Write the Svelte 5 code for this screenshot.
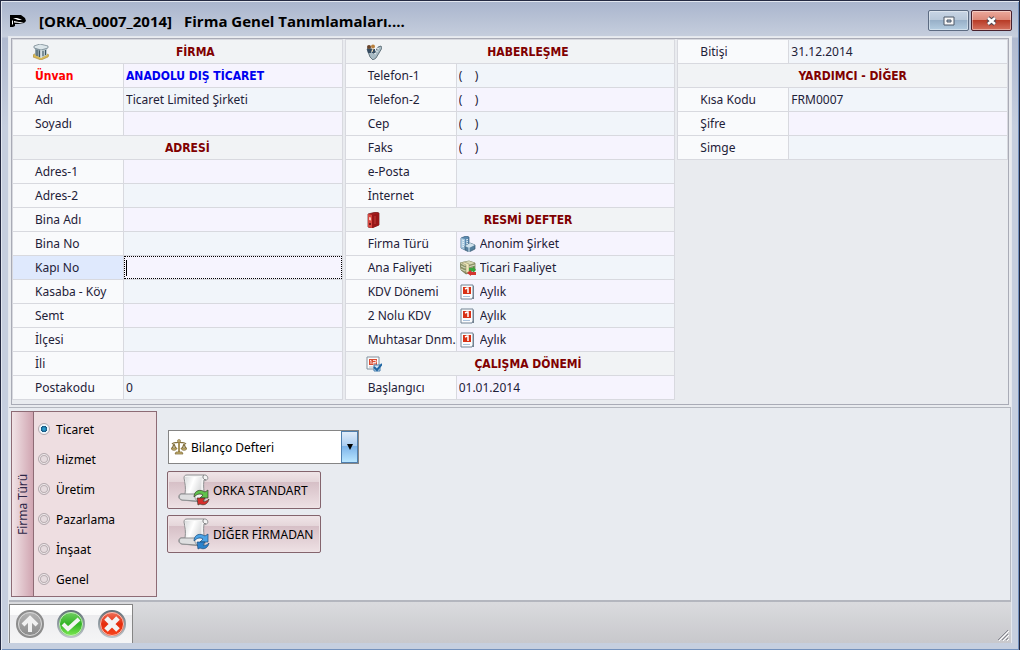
<script>
	let firmType = $state("Ticaret");
	let ledger = $state("Bilanço Defteri");

	const firmTypes = ["Ticaret", "Hizmet", "Üretim", "Pazarlama", "İnşaat", "Genel"];
	const ledgers = ["Bilanço Defteri", "İşletme Defteri"];
	const periods = ["Aylık", "3 Aylık"];

	// rows with a title are section headers, tone picks the field background
	let columns = $state([
		[
			{ title: "FİRMA", icon: "building" },
			{ id: "unvan", label: "Ünvan", value: "ANADOLU DIŞ TİCARET", tone: "pink", strong: true },
			{ id: "adi", label: "Adı", value: "Ticaret Limited Şirketi", tone: "blue" },
			{ id: "soyadi", label: "Soyadı", value: "", tone: "pink" },
			{ title: "ADRESİ" },
			{ id: "adres1", label: "Adres-1", value: "", tone: "pink" },
			{ id: "adres2", label: "Adres-2", value: "", tone: "blue" },
			{ id: "binaadi", label: "Bina Adı", value: "", tone: "pink" },
			{ id: "binano", label: "Bina No", value: "", tone: "blue" },
			{ id: "kapino", label: "Kapı No", value: "", tone: "pink", active: true },
			{ id: "kasaba", label: "Kasaba - Köy", value: "", tone: "blue" },
			{ id: "semt", label: "Semt", value: "", tone: "pink" },
			{ id: "ilcesi", label: "İlçesi", value: "", tone: "blue" },
			{ id: "ili", label: "İli", value: "", tone: "pink" },
			{ id: "posta", label: "Postakodu", value: "0", tone: "blue" }
		],
		[
			{ title: "HABERLEŞME", icon: "phone" },
			{ id: "tel1", label: "Telefon-1", value: "(    )", tone: "blue" },
			{ id: "tel2", label: "Telefon-2", value: "(    )", tone: "pink" },
			{ id: "cep", label: "Cep", value: "(    )", tone: "blue" },
			{ id: "faks", label: "Faks", value: "(    )", tone: "pink" },
			{ id: "eposta", label: "e-Posta", value: "", tone: "blue" },
			{ id: "internet", label: "İnternet", value: "", tone: "pink" },
			{ title: "RESMİ DEFTER", icon: "binder" },
			{ id: "turu", label: "Firma Türü", value: "Anonim Şirket", tone: "pink", icon: "tower", options: ["Anonim Şirket", "Limited Şirket"] },
			{ id: "faliyet", label: "Ana Faliyeti", value: "Ticari Faaliyet", tone: "blue", icon: "money", options: ["Ticari Faaliyet", "Zirai Faaliyet"] },
			{ id: "kdv", label: "KDV Dönemi", value: "Aylık", tone: "pink", icon: "day", options: periods },
			{ id: "kdv2", label: "2 Nolu KDV", value: "Aylık", tone: "blue", icon: "day", options: periods },
			{ id: "muhtasar", label: "Muhtasar Dnm.", value: "Aylık", tone: "pink", icon: "day", options: periods },
			{ title: "ÇALIŞMA DÖNEMİ", icon: "calendar" },
			{ id: "baslangic", label: "Başlangıcı", value: "01.01.2014", tone: "pink" }
		],
		[
			{ id: "bitis", label: "Bitişi", value: "31.12.2014", tone: "blue" },
			{ title: "YARDIMCI - DİĞER" },
			{ id: "kod", label: "Kısa Kodu", value: "FRM0007", tone: "blue" },
			{ id: "sifre", label: "Şifre", value: "", tone: "pink" },
			{ id: "simge", label: "Simge", value: "", tone: "blue" }
		]
	]);
</script>

{#snippet icon(name)}
	<svg class="icon" width="16" height="16" viewBox="0 0 16 16" aria-hidden="true">
		{#if name == "building"}
			<path d="M0 11l3-2 11 1 2 1-1 2-7 3-8-3z" fill="#d8b957" stroke="#a78b3c" stroke-width=".6" />
			<path d="M2 3l6 2v9l-6-3z" fill="#8fa2ab" />
			<path d="M8 5l6-2v8l-6 3z" fill="#b8c8cf" />
			<path d="M1 2l6-2 8 2v2L8 6 1 4z" fill="#dce6ea" stroke="#6c7d86" stroke-width=".7" />
			<path d="M4 6v6M6.500 6.500v6.500M10 7v5M12.500 6v5" stroke="#3e5662" stroke-width="1" />
			<path d="M8 6v8" stroke="#f4f8fa" />
		{:else if name == "phone"}
			<path d="M1 5l2-2 4 3 1 4 4-7 3-1 1 2-6 10-3 2-3-3z" fill="#a9bbc4" stroke="#4b5d67" stroke-width=".8" />
			<path d="M11 4l2 1M9.500 6.500l2 1M8 9l2 1" stroke="#edf4f7" />
			<circle cx="3" cy="3" r="2" fill="#664229" />
			<circle cx="7" cy="2.500" r="2" fill="#b77f3d" />
			<path d="M1 5h4v4H2zM5 5h4v4H6z" fill="#344a60" />
			<path d="M7 5l-1 3" stroke="#f4dfb8" />
		{:else if name == "binder"}
			<path d="M2 2l8-2 3 1v12l-7 3-4-1z" fill="#a51d1e" stroke="#651111" stroke-width=".7" />
			<path d="M2 2l4 1v13l-4-1z" fill="#d84740" />
			<path d="M6 3l7-2v12l-7 3z" fill="#981516" />
			<path d="M3 5l2 .5v3L3 8z" fill="#f4c9bd" />
			<circle cx="4" cy="12" r="1" fill="#521011" />
			<path d="M9 4v8" stroke="#bf3e38" />
		{:else if name == "tower"}
			<path d="M1 2l5-2 3 1v11l-4 2-4-2z" fill="#5c8ab0" stroke="#355a78" stroke-width=".7" />
			<path d="M1 2l4 1v11l-4-2z" fill="#9fc1d9" />
			<path d="M2 4l2 .5M2 6l2 .5M2 8l2 .5M2 10l2 .5M6 4l2-.5M6 6l2-.5M6 8l2-.5" stroke="#eaf5fb" />
			<path d="M5 10l5-3 5 2v4l-6 3-4-2z" fill="#55809f" stroke="#35576f" stroke-width=".7" />
			<path d="M5 10l5-3 5 2-6 3z" fill="#cfe1ec" />
			<path d="M9 12v4" stroke="#dcebf4" />
		{:else if name == "money"}
			<path d="M0 3l9-2 6 2v7l-9 4-5-4z" fill="#8b9367" stroke="#696d44" stroke-width=".7" />
			<path d="M0 3l9-2 6 2-10 3z" fill="#d7d8b4" />
			<path d="M1 6l4 2 10-3M1 9l4 2 9-3" stroke="#d9dbc1" fill="none" />
			<path d="M4 2l5 2v8l-3 1V5L2 3z" fill="#eee6b9" stroke="#87825b" stroke-width=".5" />
			<path d="M9 11V8h4V6l3 4-3 3v-2z" fill="#36a63b" />
			<path d="M16 12v3h-5v1l-4-3 4-3v2z" fill="#d43631" />
		{:else if name == "day"}
			<path d="M3 2h11v13H3z" fill="#71808e" />
			<path d="M1 1h12v12l-1 2H1z" fill="#fbfcfd" stroke="#728394" />
			<path d="M3 3h8v7H3z" fill="#d93116" />
			<path d="M5 5l2-1h1v5" fill="none" stroke="#fff" stroke-width="1.500" />
			<path d="M3 12.500h7" stroke="#a9c1dc" />
		{:else if name == "calendar"}
			<path d="M1 1h12v12H1z" fill="#fcfcfd" stroke="#81909d" />
			<path d="M3 3h8v6H3z" fill="#d94b32" />
			<path d="M4 4.500h1V8M7 4.500h3v2H7V8h3" fill="none" stroke="#fff" stroke-width=".8" />
			<path d="M3 11h6" stroke="#aebdca" />
			<path d="M8 9h6v6H8z" fill="#d3e5f5" stroke="#477fad" />
			<path d="M8 11l3 3 5-6" fill="none" stroke="#1d65a3" stroke-width="2" />
		{:else if name == "scales"}
			<path d="M8 1v12M5 14h6M1 5c3-3 4 0 7-2 3 2 4-1 7 2M3 5l-2 5M3 5l2 5M13 5l-2 5M13 5l2 5" fill="none" stroke="#84713e" stroke-width="1.300" />
			<path d="M7 2h2v12H7z" fill="#a8935a" />
			<path d="M0 9h6c0 3-6 3-6 0zM10 9h6c0 3-6 3-6 0zM5 13h6l1 2H4z" fill="#c9b575" stroke="#77622f" stroke-width=".7" />
			<circle cx="8" cy="2" r="1.500" fill="#c9b575" stroke="#77622f" stroke-width=".6" />
		{/if}
	</svg>
{/snippet}

{#snippet scroll(up, down, edge)}
	<svg width="32" height="32" viewBox="0 0 32 32" aria-hidden="true">
		<path d="M6 4C6 2 7 1 9 1h18c3 0 4 5 1 5h-2c-1 6 0 11 1 18 0 2-1 4-3 4L4 26c-4 0-4-6-1-6h4c1-6 0-11-1-16z" fill="#f4f4f4" stroke="#8e8f91" />
		<path d="M7 3h17c-1 7-1 11 0 18H8c1-6 0-12-1-18z" fill="url(#paper)" />
		<path d="M3 20h15c-2 2-1 5 1 7L4 26c-4-1-3-5-1-6z" fill="#dedfe0" stroke="#8e8f91" />
		<path d="M26 1c-2 1-1 5 2 5" fill="none" stroke="#77787a" />
		<path d="M16 23c0-5 4-8 9-6l2 1 3-2v8h-8l3-3c-3-2-6-1-9 2z" fill={up} stroke={edge} stroke-width=".7" />
		<path d="M31 25c-1 5-5 7-9 5l-2 1-1-7h8l-2 3c2 1 4 0 6-2z" fill={down} stroke={edge} stroke-width=".7" />
	</svg>
{/snippet}

<main class="window">
	<svg width="0" height="0" class="defs" aria-hidden="true">
		<defs>
			<linearGradient id="paper" x2="1" y2=".4"><stop stop-color="#d9dbdc" /><stop offset=".5" stop-color="#fff" /><stop offset="1" stop-color="#dbdcdd" /></linearGradient>
			<linearGradient id="gray" x2="0" y2="1"><stop stop-color="#b5b5b5" /><stop offset="1" stop-color="#898989" /></linearGradient>
			<linearGradient id="green" x2="0" y2="1"><stop stop-color="#78d26a" /><stop offset=".5" stop-color="#32b424" /><stop offset="1" stop-color="#83ee55" /></linearGradient>
			<linearGradient id="red" x2="0" y2="1"><stop stop-color="#f07862" /><stop offset=".5" stop-color="#e52c0c" /><stop offset="1" stop-color="#fa4820" /></linearGradient>
			<linearGradient id="rim" x2="0" y2="1"><stop stop-color="#65737b" /><stop offset="1" stop-color="#bdc4c9" /></linearGradient>
		</defs>
	</svg>

	<header>
		<svg class="logo" width="17" height="14" viewBox="0 0 17 14" aria-hidden="true">
			<path d="M0 1h11l4 3 1 3-2 2-6 1-3 0v2l-2 1H0z" fill="#000" />
			<path d="M3 4h4l3 1 2 1H8zM4 7l5 1h5l-4 1-6-.5zM2 6v5l1-1V7z" fill="#fff" />
		</svg>
		<h1><span>[ORKA_0007_2014]</span> <span>Firma Genel Tanımlamaları....</span></h1>
		<button class="restore" aria-label="Önceki boyut">
			<svg width="12" height="10" viewBox="0 0 12 10"><path d="M1 1h10v8H1z" fill="#f7f7f7" stroke="#4c5868" /><path d="M4 4h4v2H4z" fill="#9fb5ca" stroke="#4c5868" /></svg>
		</button>
		<button class="close" aria-label="Kapat">
			<svg width="13" height="10" viewBox="0 0 13 10"><path d="M3 2l7 6M10 2L3 8" stroke="#4d4550" stroke-width="4.500" /><path d="M3 2l7 6M10 2L3 8" stroke="#fff" stroke-width="2.500" /></svg>
		</button>
	</header>

	<div class="content">
		<section class="grid">
			{#each columns as rows}
				<div class="column">
					{#each rows as row}
						{#if row.title}
							<div class="title">
								{#if row.icon}{@render icon(row.icon)}{/if}
								<h2>{row.title}</h2>
							</div>
						{:else}
							<div class="row {row.tone}" class:active={row.active} class:strong={row.strong}>
								<label for={row.id}>{row.label}</label>
								<div class="field">
									{#if row.icon}{@render icon(row.icon)}{/if}
									{#if row.options}
										<select id={row.id} bind:value={row.value}>
											{#each row.options as option}
												<option>{option}</option>
											{/each}
										</select>
									{:else}
										{#if row.active}<span class="caret"></span>{/if}
										<input id={row.id} type="text" bind:value={row.value} />
									{/if}
								</div>
							</div>
						{/if}
					{/each}
				</div>
			{/each}
		</section>

		<section class="bottom">
			<fieldset aria-label="Firma Türü">
				<div class="strip">Firma Türü</div>
				<div class="radios">
					{#each firmTypes as type}
						<label><input type="radio" name="type" value={type} bind:group={firmType} />{type}</label>
					{/each}
				</div>
			</fieldset>
			<div class="actions">
				<div class="combo">
					{@render icon("scales")}
					<select aria-label="Defter" bind:value={ledger}>
						{#each ledgers as option}
							<option>{option}</option>
						{/each}
					</select>
					<span class="arrow"></span>
				</div>
				<button class="action">{@render scroll("#5fc24c", "#d52d2b", "#3c3a2c")}<span>ORKA STANDART</span></button>
				<button class="action">{@render scroll("#4ba3e6", "#2b82cc", "#1b4a7a")}<span>DİĞER FİRMADAN</span></button>
			</div>
		</section>

		<footer>
			<div class="tools">
				<button aria-label="Yukarı">
					<svg width="30" height="30" viewBox="0 0 30 30"><circle cx="15" cy="15" r="13" fill="url(#gray)" stroke="#8c8c8c" stroke-width="2" /><circle cx="15" cy="15" r="11.500" fill="none" stroke="#d8d8d8" /><path d="M15 23V9M8 16l7-7 7 7" fill="none" stroke="#f1f1f1" stroke-width="4" /></svg>
				</button>
				<button aria-label="Tamam">
					<svg width="30" height="30" viewBox="0 0 30 30"><circle cx="15" cy="15" r="13" fill="url(#green)" stroke="url(#rim)" stroke-width="2" /><circle cx="15" cy="15" r="11.500" fill="none" stroke="#c8e8c2" /><path d="M7 15l5 5L23 10" fill="none" stroke="#f3f5f2" stroke-width="4" /></svg>
				</button>
				<button aria-label="İptal">
					<svg width="30" height="30" viewBox="0 0 30 30"><circle cx="15" cy="15" r="13" fill="url(#red)" stroke="url(#rim)" stroke-width="2" /><circle cx="15" cy="15" r="11.500" fill="none" stroke="#f3c3ba" /><path d="M9 9l12 12M21 9L9 21" fill="none" stroke="#f3f3f3" stroke-width="5" /></svg>
				</button>
			</div>
			<svg class="grip" width="12" height="12" viewBox="0 0 12 12" aria-hidden="true"><path d="M1 11L11 1M5 11l6-6M9 11l2-2" stroke="#fff" transform="translate(1 1)" /><path d="M1 11L11 1M5 11l6-6M9 11l2-2" stroke="#85868f" /></svg>
		</footer>
	</div>
</main>

<style>
	:global(body) {
		margin: 0;
	}
	* {
		box-sizing: border-box;
	}
	.window {
		display: flex;
		flex-direction: column;
		min-height: 100vh;
		padding: 0 7px 7px;
		border: 1px solid #242a42;
		background: linear-gradient(#a9b5cd, #c6cedd 36px, #b0bad0 37px, #c6cfdf 126px, #c6cfdf);
		box-shadow: inset 1px 1px #e2e7f0, inset -1px -1px #7391bd;
		font-family: "Noto Sans", Tahoma, sans-serif;
		font-size: 12px;
		color: #1e2138;
	}
	.defs {
		position: absolute;
	}
	button, input, select {
		font: inherit;
		color: inherit;
	}
	header {
		display: flex;
		align-items: center;
		height: 35px;
		padding: 4px 0 0 2px;
	}
	h1 {
		display: flex;
		gap: 12px;
		flex: 1;
		margin: 0 0 0 12px;
		font: bold 15px "Open Sans", sans-serif;
		color: #000;
	}
	header button {
		display: flex;
		align-items: center;
		justify-content: center;
		width: 41px;
		height: 21px;
		margin-left: 2px;
		padding: 0;
		border: 1px solid #5c6b82;
		border-radius: 2px;
		box-shadow: inset 0 0 0 1px rgba(255, 255, 255, .4);
	}
	.restore {
		background: linear-gradient(#c8d5e5, #b7c7d9 50%, #98b0c8 50%, #b4cde1);
	}
	header .close {
		border-color: #48202c;
		background: linear-gradient(#eba99c, #db8676 50%, #b83c27 50%, #d47260);
	}
	.content {
		display: flex;
		flex-direction: column;
		flex: 1;
		border: 1px solid #e4e8ee;
		border-bottom: 0;
		background: #e9ebef;
	}
	.grid {
		display: flex;
		align-items: flex-start;
		gap: 2px;
		margin: 1px 2px 2px;
		padding: 0 0 4px;
		border: 1px solid #a9abb6;
	}
	.column {
		flex: 1;
		min-width: 0;
		border: 1px solid #d8d9df;
		border-bottom: 0;
	}
	.title, .row {
		display: flex;
		height: 24px;
		border-bottom: 1px solid #d8d9df;
	}
	.title {
		align-items: center;
		padding-left: 20px;
		background: #f1f3f5;
	}
	h2 {
		flex: 1;
		margin: 0;
		font: bold 12px "DejaVu Sans Condensed", Tahoma, sans-serif;
		text-align: center;
		color: #800000;
	}
	.row label {
		width: 111px;
		flex: none;
		padding-left: 22px;
		border-right: 1px solid #d8d9df;
		background: #f9fafc;
		line-height: 24px;
		white-space: nowrap;
	}
	.field {
		display: flex;
		align-items: center;
		flex: 1;
		min-width: 0;
		padding-left: 2px;
	}
	.pink .field {
		background: #f6f4fe;
	}
	.blue .field {
		background: #f1f5fa;
	}
	.field .icon {
		margin: 0 4px 0 1px;
	}
	.row input, .row select {
		flex: 1;
		min-width: 0;
		height: 22px;
		padding: 0;
		border: 0;
		outline: 0;
		background: none;
		appearance: none;
	}
	.strong {
		font-family: "DejaVu Sans Condensed", Tahoma, sans-serif;
		font-weight: bold;
	}
	.strong label {
		color: #f00;
	}
	.strong input {
		color: #0000f0;
	}
	.active label {
		background: #dfe9fd;
	}
	.active .field {
		border: 1px dotted #000;
		padding-left: 1px;
	}
	.caret {
		width: 1px;
		height: 16px;
		background: #000;
	}
	.icon {
		flex: none;
	}
	.bottom {
		display: flex;
		align-items: flex-start;
		flex: 1;
		padding: 3px 2px;
		border: 1px solid #b3b6be;
		border-width: 1px 1px 2px 0;
		background: #e8ebf0;
	}
	fieldset {
		display: flex;
		width: 146px;
		height: 186px;
		margin: 0;
		padding: 0;
		border: 1px solid #8d6b75;
		background: #eedee1;
	}
	.strip {
		width: 22px;
		border-left: 1px solid #8d6b75;
		background: linear-gradient(270deg, #f1e3e6, #d0a5b1);
		line-height: 22px;
		text-align: center;
		writing-mode: vertical-rl;
		transform: rotate(180deg);
		color: #302848;
	}
	.radios {
		padding: 2px 4px;
	}
	.radios label {
		display: flex;
		align-items: center;
		gap: 6px;
		height: 30px;
		color: #000;
	}
	.radios input {
		width: 12px;
		height: 12px;
		margin: 0;
		appearance: none;
		border: 1px solid #b4a9ae;
		border-radius: 50%;
		background: #e6dbde;
		box-shadow: inset 0 0 0 1px #f6f1f2, inset 0 0 0 2px #b9aeb2;
	}
	.radios input:checked {
		background: radial-gradient(#2d9ccc 15%, #14537f 42%, #eef5fa 50%);
		box-shadow: none;
	}
	.actions {
		display: flex;
		flex-direction: column;
		gap: 6px;
		margin: 19px 0 0 10px;
	}
	.combo {
		position: relative;
		width: 191px;
		height: 34px;
		margin: 0 0 1px 1px;
	}
	.combo select {
		width: 100%;
		height: 100%;
		padding: 0 20px 0 22px;
		appearance: none;
		border: 1px solid #858585;
		border-radius: 0;
		background: #fff;
		color: #000;
	}
	.combo .icon {
		position: absolute;
		left: 3px;
		top: 9px;
		pointer-events: none;
	}
	.arrow {
		position: absolute;
		right: 1px;
		top: 1px;
		bottom: 1px;
		display: flex;
		justify-content: center;
		align-items: center;
		width: 17px;
		border: 1px solid #4e7eae;
		background: linear-gradient(#e0ecfa, #abcdf1 45%, #79b0e8 45%, #b9e6ff);
		pointer-events: none;
	}
	.arrow::before {
		content: "";
		border: 3px solid transparent;
		border-top: 6px solid #000;
		border-bottom: 0;
	}
	.action {
		display: flex;
		align-items: center;
		gap: 3px;
		width: 154px;
		height: 38px;
		padding: 0 0 0 10px;
		border: 1px solid #84646d;
		border-radius: 2px;
		background: linear-gradient(#f0e5e8, #e5d6da 27%, #d6bfc6 27%, #eee1e4);
		box-shadow: inset 0 0 0 1px #eee3e6;
		color: #000;
		white-space: nowrap;
	}
	footer {
		display: flex;
		align-items: flex-end;
		justify-content: space-between;
		padding-top: 2px;
		background: linear-gradient(#dadbde, #c8c8cc);
	}
	.tools {
		display: flex;
		gap: 11px;
		padding: 4px 5px;
		border: 1px solid #858585;
		border-bottom: 0;
		background: linear-gradient(#fff, #fbfbfb 25%, #ececee 26%, #f5f5f6);
	}
	.tools button {
		width: 30px;
		height: 30px;
		padding: 0;
		border: 0;
		background: none;
	}
	.grip {
		margin: 0 2px 2px 0;
	}
</style>
